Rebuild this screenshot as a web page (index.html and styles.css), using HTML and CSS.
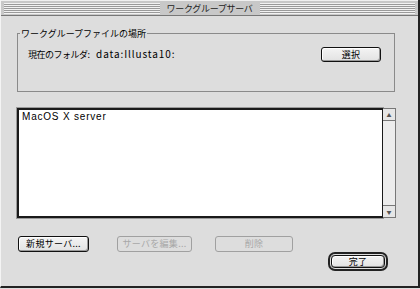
FILE: index.html
```html
<!DOCTYPE html>
<html lang="ja">
<head>
    <meta charset="UTF-8">
    <title>ワークグループサーバ</title>
    <link rel="stylesheet" href="styles.css">
</head>
<body>
    <div class="window">
        <div class="titlebar">
            <div class="stripes"></div>
            <div class="title">ワークグループサーバ</div>
            <div class="stripes"></div>
        </div>
        <div class="content">
            <fieldset class="group">
                <legend>ワークグループファイルの場所</legend>
                <div class="folder-row">
                    <span class="folder">現在のフォルダ: <span class="path">data:Illusta10:</span></span>
                    <button class="button select">選択</button>
                </div>
            </fieldset>
            <div class="list">
                <div class="list-body">
                    <div class="item">MacOS X server</div>
                </div>
                <div class="scrollbar">
                    <div class="arrow up">▲</div>
                    <div class="track"></div>
                    <div class="arrow down">▼</div>
                </div>
            </div>
            <div class="actions">
                <button class="button new">新規サーバ...</button>
                <button class="button edit" disabled>サーバを編集...</button>
                <button class="button remove" disabled>削除</button>
            </div>
            <div class="footer">
                <button class="button done">完了</button>
            </div>
        </div>
    </div>
</body>
</html>
```

FILE: styles.css
```css
body {
    margin: 0;
    background-color: #dddddd;
    font-family: "Noto Sans CJK JP", "DejaVu Sans", sans-serif;
    font-size: 9px;
    color: #000;
}
.window {
    width: 420px;
    height: 288px;
    box-sizing: border-box;
    background-color: #dddddd;
    border-left: 1px solid #f4f4f4;
    border-right: 2px solid #222;
    border-bottom: 2px solid #222;
}
.titlebar {
    display: flex;
    align-items: center;
    height: 16px;
    padding: 0 3px;
    background-color: #c8c8c8;
    border-top: 1px solid #f0f0f0;
    border-bottom: 1px solid #777;
    box-sizing: border-box;
}
.stripes {
    flex: 1;
    height: 11px;
    background: repeating-linear-gradient(to bottom, #f2f2f2 0 1px, #9a9a9a 1px 2px);
}
.title {
    padding: 0 7px;
    line-height: 13px;
    letter-spacing: -0.3px;
    color: #222;
}
.content {
    padding: 11px 22px 0 16px;
}
.group {
    margin: 0 1px 0 0;
    padding: 0 13px 0 0;
    height: 65px;
    border: 1px solid #8a8a8a;
    box-sizing: border-box;
}
.group legend {
    padding: 0 1px;
    margin-left: 2px;
    line-height: 13px;
}
.folder-row {
    display: flex;
    justify-content: space-between;
    align-items: flex-start;
    padding: 4px 0 0 10px;
}
.folder {
    padding-top: 4px;
    line-height: 12px;
    letter-spacing: -0.5px;
}
.path {
    margin-left: 5px;
    font-size: 10px;
    letter-spacing: 0.9px;
}
.button {
    font-family: "Noto Sans CJK JP", "DejaVu Sans", sans-serif;
    font-size: 9px;
    line-height: 12px;
    padding: 0;
    white-space: nowrap;
    color: #000;
    background: linear-gradient(#f4f4f4, #e2e2e2);
    border: 1px solid #111;
    border-radius: 3px;
    box-shadow: inset -1px -1px 0 #999, inset 1px 1px 0 #fff;
    letter-spacing: 0.3px;
}
.button:disabled {
    color: #a8a8a8;
    border-color: #a0a0a0;
    background: #dddddd;
    box-shadow: none;
}
.select {
    width: 60px;
    height: 15px;
    margin-top: 3px;
}
.list {
    display: flex;
    margin-top: 16px;
    height: 110px;
}
.list-body {
    flex: 1;
    background-color: #fff;
    border: 2px solid #1a1a1a;
    border-right: 1px solid #1a1a1a;
    box-shadow: 0 0 0 1px #9a9a9a;
    padding: 1px 3px;
}
.item {
    font-family: "Liberation Sans", sans-serif;
    font-size: 10px;
    line-height: 12px;
    letter-spacing: 0.8px;
}
.scrollbar {
    display: flex;
    flex-direction: column;
    width: 13px;
    box-sizing: border-box;
    background-color: #ececec;
    border: 1px solid #777;
    border-left: none;
}
.arrow {
    height: 11px;
    font-size: 5px;
    line-height: 11px;
    text-align: center;
    color: #555;
    background-color: #e6e6e6;
}
.arrow.up {
    border-bottom: 1px solid #777;
}
.arrow.down {
    border-top: 1px solid #777;
}
.track {
    flex: 1;
}
.actions {
    display: flex;
    margin-top: 18px;
    padding-left: 1px;
}
.new {
    width: 71px;
    height: 16px;
}
.edit {
    width: 75px;
    height: 16px;
    margin-left: 28px;
}
.remove {
    width: 78px;
    height: 16px;
    margin-left: 23px;
}
.footer {
    display: flex;
    justify-content: flex-end;
    margin-top: 3px;
    padding-right: 11px;
}
.done {
    width: 54px;
    height: 13px;
    box-shadow: inset -1px -1px 0 #999, inset 1px 1px 0 #fff, 0 0 0 1px #ddd, 0 0 0 3px #222;
    border-radius: 4px;
}
```
